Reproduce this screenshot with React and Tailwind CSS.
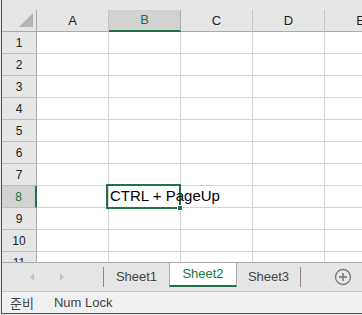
import React from 'react'

const cols = ['A', 'B', 'C', 'D', 'E']
const rows = [1, 2, 3, 4, 5, 6, 7, 8, 9, 10, 11]

const App = () => {
  return (
    <div className="w-[362px] h-[315px] overflow-hidden flex bg-[#e6e6e6] font-['Liberation_Sans',Arial,sans-serif]">
      <div className="w-px bg-[#e6e6e6]" />
      <div className="w-px bg-[#217346] h-[314px]" />
      <div className="flex-1 flex flex-col min-w-0">
        <div className="h-[10px] bg-[#e6e6e6]" />
        {/* grid */}
        <div className="h-[252px] overflow-hidden bg-white relative">
          <div className="flex h-[22px]">
            <div className="w-[35px] shrink-0 bg-[#e6e6e6] border-r border-b border-[#ababab] relative">
              <svg className="absolute left-[17px] top-[3px]" width="15" height="15" viewBox="0 0 15 15">
                <polygon points="14,0 14,14 0,14" fill="#b4b4b4" />
              </svg>
            </div>
            {cols.map((c) => (
              <div
                key={c}
                className={
                  c === 'B'
                    ? 'w-[72px] shrink-0 bg-[#d2d2d2] border-r border-[#ababab] border-b-2 border-b-[#217346] flex items-center justify-center text-[13px] text-[#217346]'
                    : 'w-[72px] shrink-0 bg-[#e6e6e6] border-r border-b border-[#c6c6c6] border-b-[#ababab] flex items-center justify-center text-[13px] text-[#222]'
                }
              >
                {c}
              </div>
            ))}
          </div>
          {rows.map((r) => (
            <div key={r} className="flex h-[22px]">
              <div
                className={
                  r === 8
                    ? 'w-[35px] shrink-0 bg-[#d2d2d2] border-r-2 border-r-[#217346] border-b border-b-[#bfbfbf] flex items-center justify-center text-[12px] text-[#217346]'
                    : 'w-[35px] shrink-0 bg-[#e6e6e6] border-r border-r-[#ababab] border-b border-b-[#bfbfbf] flex items-center justify-center text-[12px] text-[#222]'
                }
              >
                {r}
              </div>
              {cols.map((c) => (
                <div key={c} className="w-[72px] shrink-0 border-r border-b border-[#d4d4d4] flex items-center">
                  {r === 8 && c === 'B' && (
                    <span className="pl-[1px] whitespace-nowrap text-[15px] text-black relative z-10">CTRL + PageUp</span>
                  )}
                </div>
              ))}
            </div>
          ))}
          {/* active cell */}
          <div className="absolute left-[104px] top-[174px] w-[75px] h-[25px] border-2 border-[#217346]" />
          <div className="absolute left-[175px] top-[195px] w-[6px] h-[6px] bg-[#217346] border border-white" />
        </div>
        {/* sheet tabs */}
        <div className="h-[29px] border-t border-[#ababab] bg-[#e6e6e6] flex">
          <div className="w-[101px] shrink-0 flex items-center pl-[28px] gap-[25px]">
            <svg width="5" height="8" viewBox="0 0 5 8"><polygon points="4,0 4,8 0,4" fill="#c4c4c4" /></svg>
            <svg width="5" height="8" viewBox="0 0 5 8"><polygon points="0,0 0,8 4,4" fill="#c4c4c4" /></svg>
          </div>
          <div className="w-px h-[20px] mt-[4px] bg-[#8a8a8a] shrink-0" />
          <div className="w-[65px] shrink-0 flex items-center justify-center text-[13px] text-[#444]">Sheet1</div>
          <div className="w-[68px] h-[24px] shrink-0 bg-white border-x border-[#ababab] border-b-2 border-b-[#217346] flex items-center justify-center text-[13px] text-[#217346]">
            Sheet2
          </div>
          <div className="w-[63px] shrink-0 flex items-center justify-center text-[13px] text-[#444]">Sheet3</div>
          <div className="w-px h-[20px] mt-[4px] bg-[#8a8a8a] shrink-0" />
          <div className="flex-1 flex items-center justify-end pr-[10px]">
            <svg width="18" height="18" viewBox="0 0 18 18">
              <circle cx="9" cy="9" r="7.5" fill="none" stroke="#7a7a7a" strokeWidth="1.3" />
              <line x1="9" y1="5" x2="9" y2="13" stroke="#7a7a7a" strokeWidth="1.6" />
              <line x1="5" y1="9" x2="13" y2="9" stroke="#7a7a7a" strokeWidth="1.6" />
            </svg>
          </div>
        </div>
        {/* status bar */}
        <div className="h-[23px] border-t border-[#c6c6c6] border-b border-b-[#217346] bg-[#f0f0f0] flex items-center text-[13px] text-[#444]">
          <span className="pl-[8px] font-['Noto_Sans_CJK_KR',sans-serif]">준비</span>
          <span className="pl-[20px]">Num Lock</span>
        </div>
        <div className="h-px bg-[#e6e6e6]" />
      </div>
    </div>
  )
}

export default App
